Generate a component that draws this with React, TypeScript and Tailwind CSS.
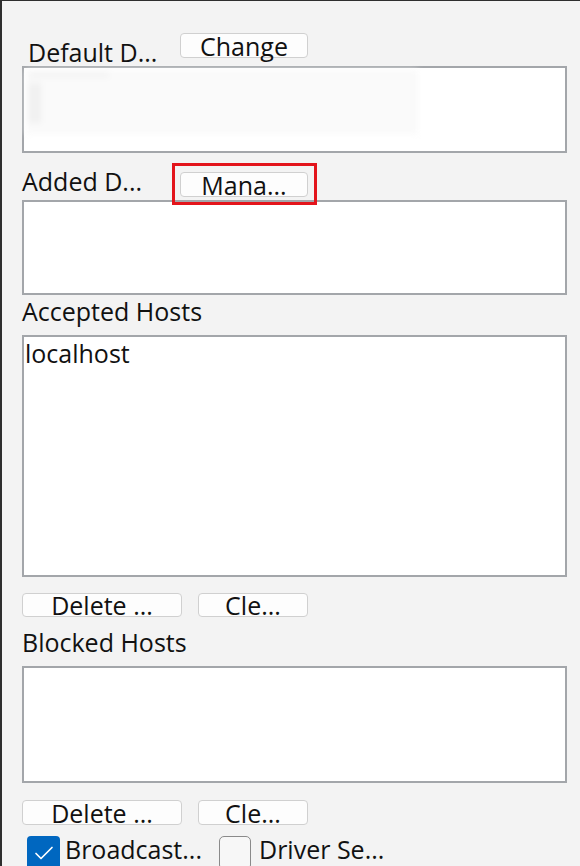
export default function App() {
  return (
    <div className="w-[580px] h-[866px] overflow-hidden bg-[#f3f3f3] border-t border-l-2 border-[#2e2e2e] pl-[20px] pr-[13px] font-['Open_Sans','Segoe_UI',sans-serif] text-[25px] text-[#111]">
      <div className="flex flex-col">
        {/* Default D... */}
        <div className="mt-[32px] h-[33px] flex items-start">
          <div className="w-[158px] pl-[6px] mt-[7px] leading-[25px] whitespace-nowrap">Default D...</div>
          <button className="block h-[25px] w-[128px] bg-[#fdfdfd] border border-[#d0d0d0] rounded-[4px] leading-[22px]">Change</button>
        </div>
        <div className="h-[87px] bg-white border-2 border-[#a3a6aa] p-[2px]">
          <div className="w-[392px] h-[64px] bg-[#fafafa] blur-[3px] flex flex-col gap-[6px] pt-[3px] pl-[3px]">
            <div className="w-[80px] h-[4px] bg-[#f1f1f1]"></div>
            <div className="w-[12px] h-[40px] bg-[#f0f0f0]"></div>
          </div>
        </div>

        {/* Added D... */}
        <div className="h-[47px] flex items-start">
          <div className="w-[158px] mt-[16px] leading-[25px] whitespace-nowrap">Added D...</div>
          <div className="relative flex mt-[19px]">
            <button className="block h-[25px] w-[128px] bg-[#fdfdfd] border border-[#d0d0d0] rounded-[4px] leading-[22px]">Mana...</button>
            <div className="absolute -left-[8px] -top-[9px] -right-[9px] -bottom-[8px] border-[3px] border-[#e3141b]"></div>
          </div>
        </div>
        <div className="h-[95px] bg-white border-2 border-[#a3a6aa]"></div>

        {/* Accepted Hosts */}
        <div className="mt-[4px] mb-[11px] leading-[25px]">Accepted Hosts</div>
        <div className="h-[242px] bg-white border-2 border-[#a3a6aa] pl-[1px] pt-[4px]">
          <div className="leading-[25px]">localhost</div>
        </div>
        <div className="mt-[16px] h-[24px] flex gap-[16px]">
          <button className="block h-[24px] w-[160px] bg-[#fdfdfd] border border-[#d0d0d0] rounded-[4px] leading-[21px]">Delete ...</button>
          <button className="block h-[24px] w-[110px] bg-[#fdfdfd] border border-[#d0d0d0] rounded-[4px] leading-[21px]">Cle...</button>
        </div>

        {/* Blocked Hosts */}
        <div className="mt-[13px] mb-[11px] leading-[25px]">Blocked Hosts</div>
        <div className="h-[117px] bg-white border-2 border-[#a3a6aa]"></div>
        <div className="mt-[17px] h-[25px] flex gap-[16px]">
          <button className="block h-[25px] w-[160px] bg-[#fdfdfd] border border-[#d0d0d0] rounded-[4px] leading-[22px]">Delete ...</button>
          <button className="block h-[25px] w-[110px] bg-[#fdfdfd] border border-[#d0d0d0] rounded-[4px] leading-[22px]">Cle...</button>
        </div>

        {/* Checkboxes */}
        <div className="mt-[11px] flex items-start">
          <div className="ml-[5px] w-[33px] h-[34px] rounded-[4px] bg-[#0067c0] flex items-center justify-center">
            <svg width="20" height="16" viewBox="0 0 20 16" fill="none">
              <path d="M2 8.5 L7 13.5 L18 2.5" stroke="white" strokeWidth="1.7" strokeLinecap="round" strokeLinejoin="round" />
            </svg>
          </div>
          <div className="ml-[5px] mt-[1px] leading-[25px] whitespace-nowrap">Broadcast...</div>
          <div className="ml-[17px] w-[32px] h-[34px] rounded-[5px] border-[1.5px] border-[#8a8a8a] bg-[#f7f7f7]"></div>
          <div className="ml-[8px] mt-[1px] leading-[25px] whitespace-nowrap">Driver Se...</div>
        </div>
      </div>
    </div>
  )
}
